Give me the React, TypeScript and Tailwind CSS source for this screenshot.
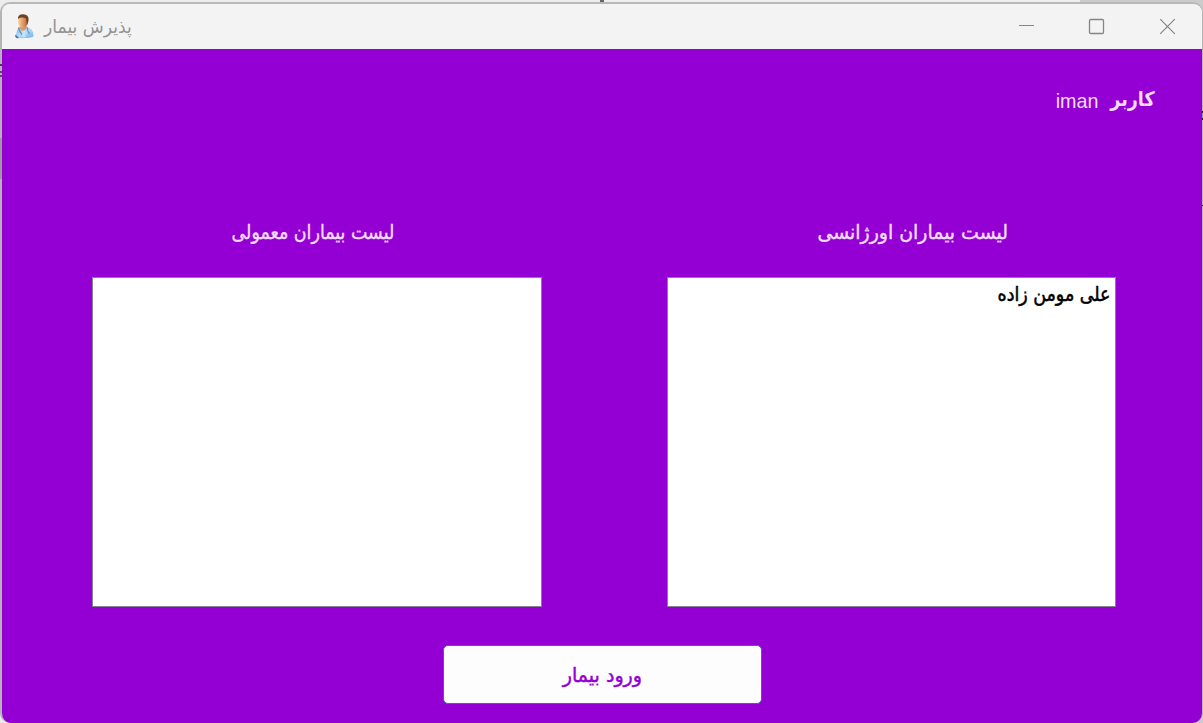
const persian = "inline-block whitespace-nowrap font-['DejaVu_Sans_Condensed','DejaVu_Sans',sans-serif]";

function PatientIcon() {
  return (
    <svg width="21" height="26" viewBox="1.5 0 21 26" className="shrink-0">
      <defs>
        <linearGradient id="face" x1="0" x2="1">
          <stop offset="0" stopColor="#ffd2a3" />
          <stop offset="1" stopColor="#b9642c" />
        </linearGradient>
        <linearGradient id="coat" x1="0" x2="1" y2="1">
          <stop offset="0" stopColor="#7fb2dc" />
          <stop offset=".5" stopColor="#b5dcfa" />
          <stop offset="1" stopColor="#6baee4" />
        </linearGradient>
      </defs>
      <path d="M3 23 Q4 17 6 13 L14 13 Q21 14 21 22 Q20 24 12 24 Q6 25 3 23Z" fill="url(#coat)" />
      <path d="M8 11 L14 10 L14 14 L11 18 L7 14Z" fill="#df9863" />
      <ellipse cx="10.5" cy="7.5" rx="5" ry="6.3" fill="url(#face)" />
      <path d="M5.5 5 Q5 .5 10.5 .3 Q17 .5 16 7 L14.5 11 L13.5 4.5 Q9 2.5 5.5 5Z" fill="#70401f" />
      <path d="M6 14 Q7 18 10 21 M14.5 13 Q15 17 17 20" stroke="#6694b8" strokeWidth="1.2" fill="none" />
      <path d="M9.5 17 L13 16 L13 23 L10 23Z" fill="#c3e3fb" />
      <path d="M3.5 21 Q3 23.5 6 23.5" stroke="#54718a" strokeWidth="1.5" fill="none" />
    </svg>
  );
}

function TitleBar() {
  return (
    <header className="flex h-[45px] shrink-0 items-center justify-between bg-[#f3f3f3]">
      <div className="flex items-center gap-[9px] pl-[12px]">
        <PatientIcon />
        <span dir="rtl" className={`${persian} origin-left scale-x-[1.06] text-[18px] leading-6 text-[#939393]`}>پذیرش بیمار</span>
      </div>
      <div className="flex items-center gap-[54px] pr-[26px] text-[#858585]">
        <svg width="17" height="17" viewBox="0 0 17 17" fill="none" stroke="currentColor"><path d="M2 7.5H17" /></svg>
        <svg width="17" height="17" viewBox="0 0 17 17" fill="none" stroke="currentColor" strokeWidth="1.3"><rect x="1.5" y="1.5" width="14" height="14" rx="1.2" /></svg>
        <svg width="17" height="17" viewBox="0 0 17 17" fill="none" stroke="currentColor" strokeWidth="1.2"><path d="M1.2 1.2 15.8 15.8M15.8 1.2 1.2 15.8" /></svg>
      </div>
    </header>
  );
}

function PatientList({ title, patients, width, heading, stretch }: { title: string; patients: string[]; width: string; heading: string; stretch: string }) {
  return (
    <section className={`flex flex-col ${width}`}>
      <h2 dir="rtl" className={`flex h-[60px] items-start justify-center ${heading}`}>
        <span className={`${persian} ${stretch} text-[20px] leading-[30px] text-[#f2dcfb] [-webkit-text-stroke:0.4px_#f2dcfb]`}>{title}</span>
      </h2>
      <ul dir="rtl" className="h-[330px] border border-[#858292] bg-white px-1 pt-[3px]">
        {patients.map((name) => (
          <li key={name} className="h-[27px]"><span className={`${persian} origin-right scale-x-[0.97] text-[20px] leading-[27px] text-black [-webkit-text-stroke:0.5px_black]`}>{name}</span></li>
        ))}
      </ul>
    </section>
  );
}

export default function App() {
  return (
    <div className="relative h-[723px] w-[1203px] overflow-hidden bg-[linear-gradient(90deg,#ececec_0_600px,#666_600px_604px,#efefef_604px_1080px,#cbcbcb_1080px)] pt-[2px]">
      <main className="flex h-[721px] flex-col overflow-hidden rounded-[10px] border-2 border-b-0 border-r-1 border-[#b5b5b5] border-t-[#b8b8b8]">
        <TitleBar />
        <div className="flex flex-1 flex-col bg-[#9400d3]">
          <div dir="rtl" className="flex h-[168px] items-start gap-[11px] pr-[47px] pt-[35px] text-[#f2dcfb]">
            <span className={`${persian} origin-right scale-x-[0.97] text-[20px] font-bold leading-[30px]`}>کاربر</span>
            <span className="origin-right scale-x-[0.94] font-['Liberation_Sans',sans-serif] text-[21px] leading-[34px]">iman</span>
          </div>
          <div className="flex justify-between pl-[90px] pr-[86px]">
            <PatientList title="لیست بیماران معمولی" patients={[]} width="w-[450px]" heading="pr-[8px]" stretch="scale-x-[0.97]" />
            <PatientList title="لیست بیماران اورژانسی" patients={["علی مومن زاده"]} width="w-[449px]" heading="pl-[43px]" stretch="scale-x-[1.05]" />
          </div>
          <button dir="rtl" className="ml-[441px] mt-[38px] h-[59px] w-[319px] rounded-[5px] border border-[#1b70d2] bg-[#fdfdfd] text-[#9400d3]">
            <span className={`${persian} scale-x-[1.06] text-[20px] leading-[30px] [-webkit-text-stroke:0.4px_#9400d3]`}>ورود بیمار</span>
          </button>
        </div>
      </main>
      <i className="absolute left-0 top-[138px] h-[41px] w-[2px] bg-[#9c9c9c]" />
      <i className="absolute left-0 top-[64px] h-[2px] w-[2px] bg-[#444]" />
      <i className="absolute left-0 top-[71px] h-[6px] w-[2px] border-y-2 border-[#555]" />
      <i className="absolute right-0 top-[111px] h-[9px] w-px border-y-2 border-[#222] bg-[#8298ba]" />
      <i className="absolute right-0 top-[205px] h-px w-px bg-[#222]" />
    </div>
  );
}
